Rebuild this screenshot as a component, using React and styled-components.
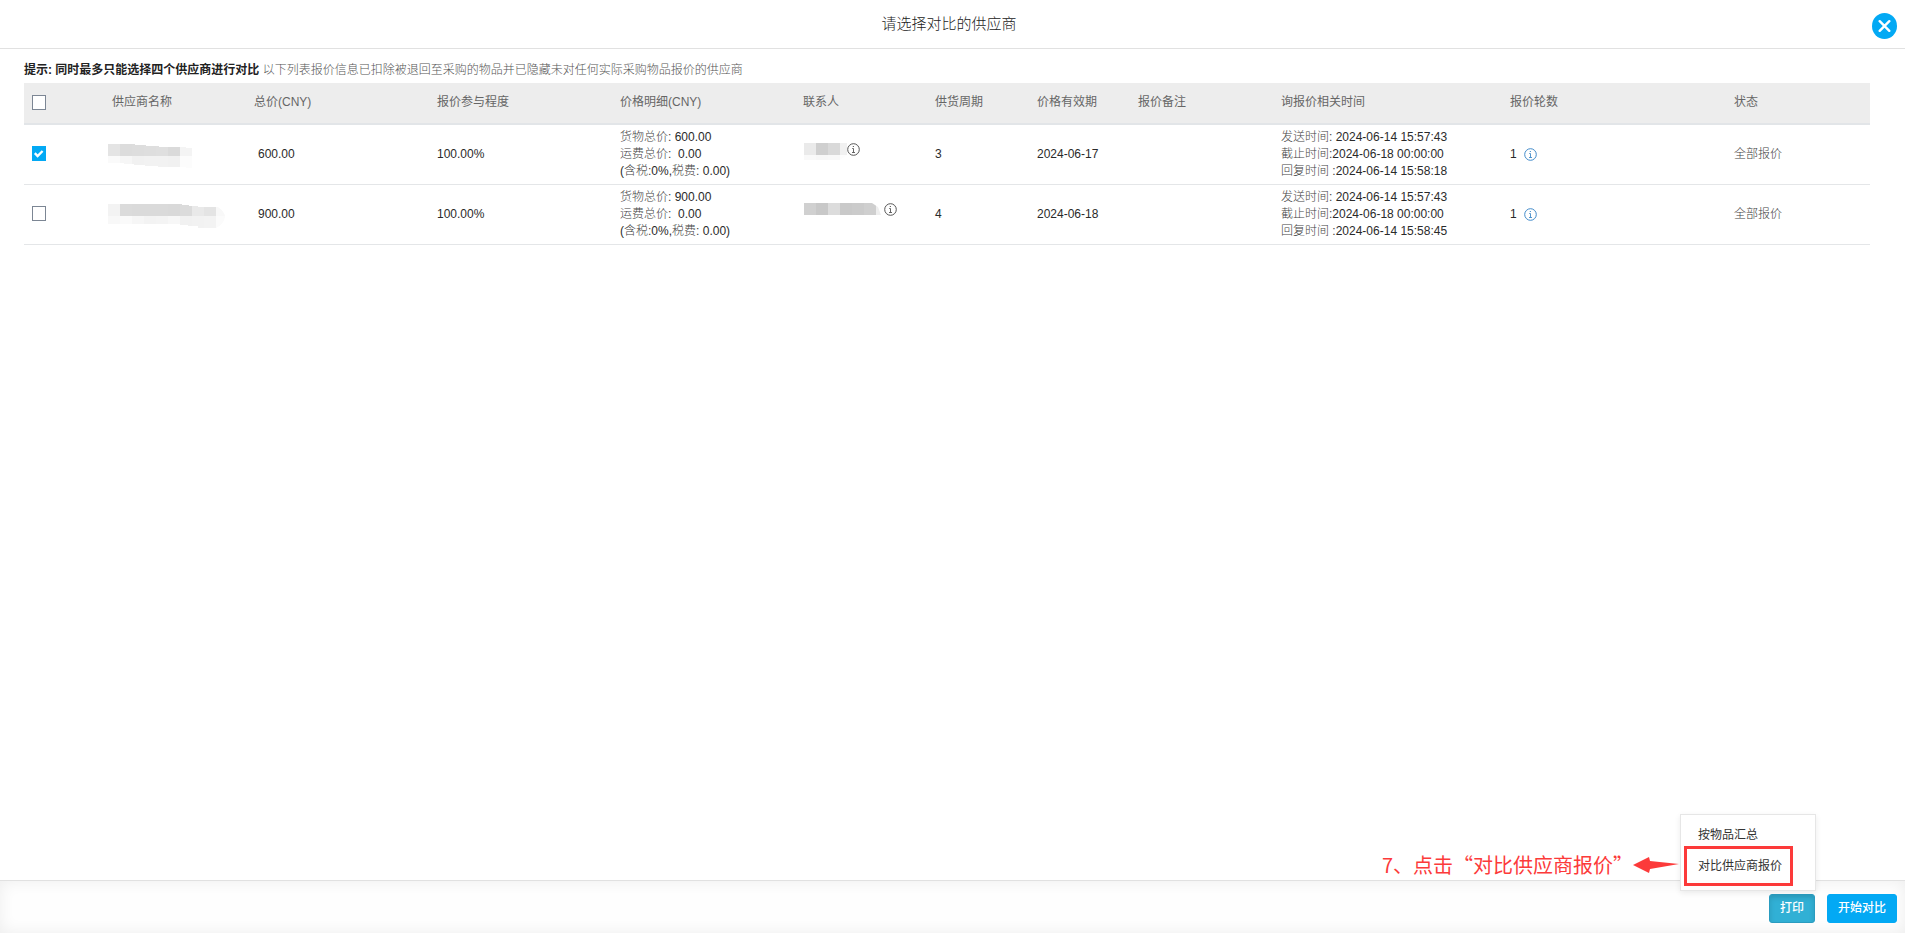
import React from "react"
import styled, { createGlobalStyle } from "styled-components"

const GlobalStyle = createGlobalStyle`
  * {
    box-sizing: border-box;
  }

  body {
    margin: 0;
    background: #fff;
    color: #2a2a2a;
    font: 12px/17px "Liberation Sans", "Noto Sans CJK SC", sans-serif;
  }

  button,
  input {
    font: inherit;
  }
`

const Page = styled.div`
  min-height: 100vh;
  display: flex;
  flex-direction: column;
`

const Header = styled.header`
  display: flex;
  align-items: center;
  height: 49px;
  padding: 0 8px 0 26px;
  border-bottom: 1px solid #e1e1e1;
`

const Title = styled.h1`
  flex: 1;
  margin: 0;
  text-align: center;
  font-size: 15px;
  line-height: 20px;
  font-weight: 300;
  color: #222;
`

const CloseButton = styled.button`
  display: flex;
  align-items: center;
  justify-content: center;
  width: 25px;
  height: 26px;
  margin-top: 4px;
  padding: 0;
  border: 0;
  border-radius: 50%;
  background: #03a9f4;
`

const Main = styled.main`
  flex: 1;
  padding: 13px 35px 0 24px;
`

const Tip = styled.p`
  margin: 0 0 4px;
  color: #555;
  font-weight: 300;

  strong {
    color: #222;
    font-weight: 700;
  }
`

const Table = styled.table`
  width: 100%;
  table-layout: fixed;
  border-spacing: 0;
`

const HeadCell = styled.th`
  height: 42px;
  padding: 0 8px 2px;
  background: #ededed;
  border-bottom: 2px solid #e2e5e8;
  color: #666;
  font-weight: 400;
  text-align: left;
`

const Cell = styled.td`
  height: 60px;
  padding: 4px 8px;
  border-bottom: 1px solid #e4e6e8;
  font-weight: ${props => (props.$muted ? 300 : 400)};
  color: ${props => (props.$muted ? "#444" : "#2a2a2a")};
`

const NameCell = styled(Cell)`
  padding: 6px 4px 4px;
`

const CheckCell = styled(Cell)`
  padding: 4px 8px 6px;
`

const Label = styled.span`
  color: #444;
  font-weight: 300;
`

const Price = styled.span`
  padding-left: 4px;
`

const Checkbox = styled.input`
  appearance: none;
  display: block;
  width: 14px;
  height: 15px;
  margin: 0;
  border: 1px solid #7c8694;
  background: #fff;

  &:checked {
    border-color: #03a9f4;
    background: #03a9f4
      url("data:image/svg+xml,%3Csvg xmlns='http://www.w3.org/2000/svg' viewBox='0 0 12 13'%3E%3Cpath d='M1.8 6.2l2.8 2.8 5-5' fill='none' stroke='%23fff' stroke-width='2.4'/%3E%3C/svg%3E")
      center / 12px 13px no-repeat;
  }
`

const Contact = styled.div`
  display: flex;
  align-items: flex-start;
  padding: 0 0 7px 1px;
`

const Rounds = styled.div`
  display: flex;
  align-items: center;
  gap: 7px;
`

const InfoButton = styled.button`
  display: flex;
  padding: 0;
  border: 0;
  background: none;
  color: ${props => props.color};
`

const Mosaic = styled.svg`
  display: block;
  flex: none;
`

const Footer = styled.footer`
  display: flex;
  align-items: flex-start;
  justify-content: flex-end;
  gap: 12px;
  height: 53px;
  padding: 13px 8px 0 0;
  border-top: 1px solid #e1e1e1;
  background: #fefefe;
  box-shadow: inset 0 0 16px rgba(0, 0, 0, 0.07);
`

const Button = styled.button`
  display: block;
  height: 29px;
  padding: 0 10px;
  border: 1px solid #03a9f4;
  border-radius: 3px;
  background: #03a9f4;
  color: #fff;
  font-weight: 500;
`

const PrintButton = styled(Button)`
  border-color: #2a9cc0;
  background: #31b0d5;
  box-shadow: inset 0 3px 5px rgba(0, 0, 0, 0.125);
`

const MenuAnchor = styled.div`
  position: relative;
`

const Menu = styled.div`
  position: absolute;
  right: -1px;
  bottom: 32px;
  width: 136px;
  padding: 9px 3px 4px;
  border: 1px solid #e6e6e6;
  background: #fff;
  box-shadow: 0 2px 6px rgba(0, 0, 0, 0.08);
`

const MenuItem = styled.button`
  display: block;
  width: 109px;
  height: ${props => (props.$marked ? 40 : 22)}px;
  padding: 0 ${props => (props.$marked ? 11 : 14)}px;
  border: ${props => (props.$marked ? "3px solid #fc3a3a" : "0")};
  background: none;
  color: #333;
  text-align: left;
  white-space: nowrap;
`

const Note = styled.div`
  position: absolute;
  right: 136px;
  bottom: 44px;
  display: flex;
  align-items: center;
  color: #fc3a3a;
  font-family: "Noto Sans CJK SC", sans-serif;
  font-size: 20px;
  line-height: 28px;
  white-space: nowrap;
`

const columns = [
  { title: "供应商名称", width: 142 },
  { title: "总价(CNY)", width: 183 },
  { title: "报价参与程度", width: 183 },
  { title: "价格明细(CNY)", width: 183 },
  { title: "联系人", width: 132 },
  { title: "供货周期", width: 102 },
  { title: "价格有效期", width: 101 },
  { title: "报价备注", width: 143 },
  { title: "询报价相关时间", width: 229 },
  { title: "报价轮数", width: 224 },
  { title: "状态", width: 144 },
]

const suppliers = [
  {
    id: 1,
    checked: true,
    total: "600.00",
    period: "3",
    validUntil: "2024-06-17",
    replied: "2024-06-14 15:58:18",
    name: {
      width: 84,
      height: 24,
      clip: "M0 0H27V1H38V2H51V3H78V4H84V24H78V23H50V22H37V21H26V20H16V19H0Z",
      rows: [
        ["#e4e4e4", "#dcdcdc", "#dddddd", "#dedede", "#dfdfdf", "#dadada", "#f4f4f4"],
        ["#fafafa", "#f6f6f6", "#f1f1f1", "#f2f2f2", "#f2f2f2", "#f1f1f1", "#fcfcfc"],
      ],
    },
    contact: {
      width: 43,
      height: 17,
      clip: "M0 0H43V12L36 17H0Z",
      rows: [
        ["#eaeaea", "#cfcfcf", "#d9d9d9", "#f1f1f1"],
        ["#f9f9f9", "#f7f7f7", "#f8f8f8", "#fdfdfd"],
      ],
    },
  },
  {
    id: 2,
    checked: false,
    total: "900.00",
    period: "4",
    validUntil: "2024-06-18",
    replied: "2024-06-14 15:58:45",
    name: {
      width: 117,
      height: 24,
      clip: "M0 0H74V1H81V2H90V3H110Q117 8 117 13Q116 20 108 24H90V22H80V21H72V20H0Z",
      rows: [
        ["#f3f3f3", "#dbdbdb", "#dadada", "#dadada", "#dadada", "#d9d9d9", "#dbdbdb", "#e9e9e9", "#e4e4e4", "#f8f8f8"],
        ["#f8f8f8", "#fafafa", "#f6f6f6", "#f3f3f3", "#f4f4f4", "#f7f7f7", "#f1f1f1", "#f2f2f2", "#f3f3f3", "#fbfbfb"],
      ],
    },
    contact: {
      width: 80,
      height: 17,
      clip: "M0 0H68L74 4L77 12H0Z",
      rows: [["#d0d0d0", "#c8c8c8", "#dcdcdc", "#c9c9c9", "#cbcbcb", "#cfcfcf", "#eeeeee"]],
    },
  },
]

const Redacted = ({ id, data }) => (
  <Mosaic width={data.width} height={data.height} aria-hidden="true">
    <clipPath id={id}>
      <path d={data.clip} />
    </clipPath>
    <g clipPath={`url(#${id})`} shapeRendering="crispEdges">
      {data.rows.map((row, y) =>
        row.map((fill, x) => (
          <rect key={`${x}-${y}`} x={x * 12} y={y * 12} width="12" height="12" fill={fill} />
        ))
      )}
    </g>
  </Mosaic>
)

const InfoIcon = () => (
  <svg width="13" height="13" viewBox="0 0 13 13" fill="none" stroke="currentColor">
    <circle cx="6.5" cy="6.5" r="5.8" />
    <path d="M5.2 5.5H6.5V9.5M5 9.5H8M5.8 3.5H7" strokeWidth="0.9" />
  </svg>
)

const SupplierRow = ({ supplier }) => (
  <tr>
    <CheckCell>
      <Checkbox
        type="checkbox"
        defaultChecked={supplier.checked}
        aria-label="供应商"
      />
    </CheckCell>
    <NameCell>
      <Redacted id={`name-${supplier.id}`} data={supplier.name} />
    </NameCell>
    <Cell>
      <Price>{supplier.total}</Price>
    </Cell>
    <Cell>100.00%</Cell>
    <Cell>
      <Label>货物总价:</Label> {supplier.total}
      <br />
      <Label>运费总价:</Label> &nbsp;0.00
      <br />
      (<Label>含税:</Label>0%,<Label>税费:</Label> 0.00)
    </Cell>
    <Cell>
      <Contact>
        <Redacted id={`contact-${supplier.id}`} data={supplier.contact} />
        <InfoButton type="button" color="#555" aria-label="联系人">
          <InfoIcon />
        </InfoButton>
      </Contact>
    </Cell>
    <Cell>{supplier.period}</Cell>
    <Cell>{supplier.validUntil}</Cell>
    <Cell />
    <Cell>
      <Label>发送时间:</Label> 2024-06-14 15:57:43
      <br />
      <Label>截止时间:</Label>2024-06-18 00:00:00
      <br />
      <Label>回复时间 :</Label>
      {supplier.replied}
    </Cell>
    <Cell>
      <Rounds>
        1
        <InfoButton type="button" color="#428bca" aria-label="报价轮数">
          <InfoIcon />
        </InfoButton>
      </Rounds>
    </Cell>
    <Cell $muted>全部报价</Cell>
  </tr>
)

export default () => (
  <Page>
    <GlobalStyle />
    <Header>
      <Title>请选择对比的供应商</Title>
      <CloseButton type="button" aria-label="关闭">
        <svg width="13" height="13" viewBox="0 0 13 13" stroke="#fff" strokeWidth="2.4" strokeLinecap="round">
          <path d="M1.7 1.2L11.3 10.8M11.3 1.2L1.7 10.8" />
        </svg>
      </CloseButton>
    </Header>
    <Main>
      <Tip>
        <strong>提示: 同时最多只能选择四个供应商进行对比</strong>{" "}
        以下列表报价信息已扣除被退回至采购的物品并已隐藏未对任何实际采购物品报价的供应商
      </Tip>
      <Table>
        <colgroup>
          <col width="80" />
          {columns.map(column => (
            <col key={column.title} width={column.width} />
          ))}
        </colgroup>
        <thead>
          <tr>
            <HeadCell>
              <Checkbox type="checkbox" aria-label="全选" />
            </HeadCell>
            {columns.map(column => (
              <HeadCell key={column.title}>{column.title}</HeadCell>
            ))}
          </tr>
        </thead>
        <tbody>
          {suppliers.map(supplier => (
            <SupplierRow key={supplier.id} supplier={supplier} />
          ))}
        </tbody>
      </Table>
    </Main>
    <Footer>
      <MenuAnchor>
        <PrintButton type="button">打印</PrintButton>
        <Menu>
          <MenuItem type="button">按物品汇总</MenuItem>
          <MenuItem type="button" $marked>
            对比供应商报价
          </MenuItem>
        </Menu>
        <Note>
          7、点击“对比供应商报价”
          <svg width="46" height="16" viewBox="0 0 46 16" fill="#fc3a3a">
            <path d="M0 8L16 0L17 4L46 7L17 12L16 16Z" />
          </svg>
        </Note>
      </MenuAnchor>
      <Button type="button">开始对比</Button>
    </Footer>
  </Page>
)
